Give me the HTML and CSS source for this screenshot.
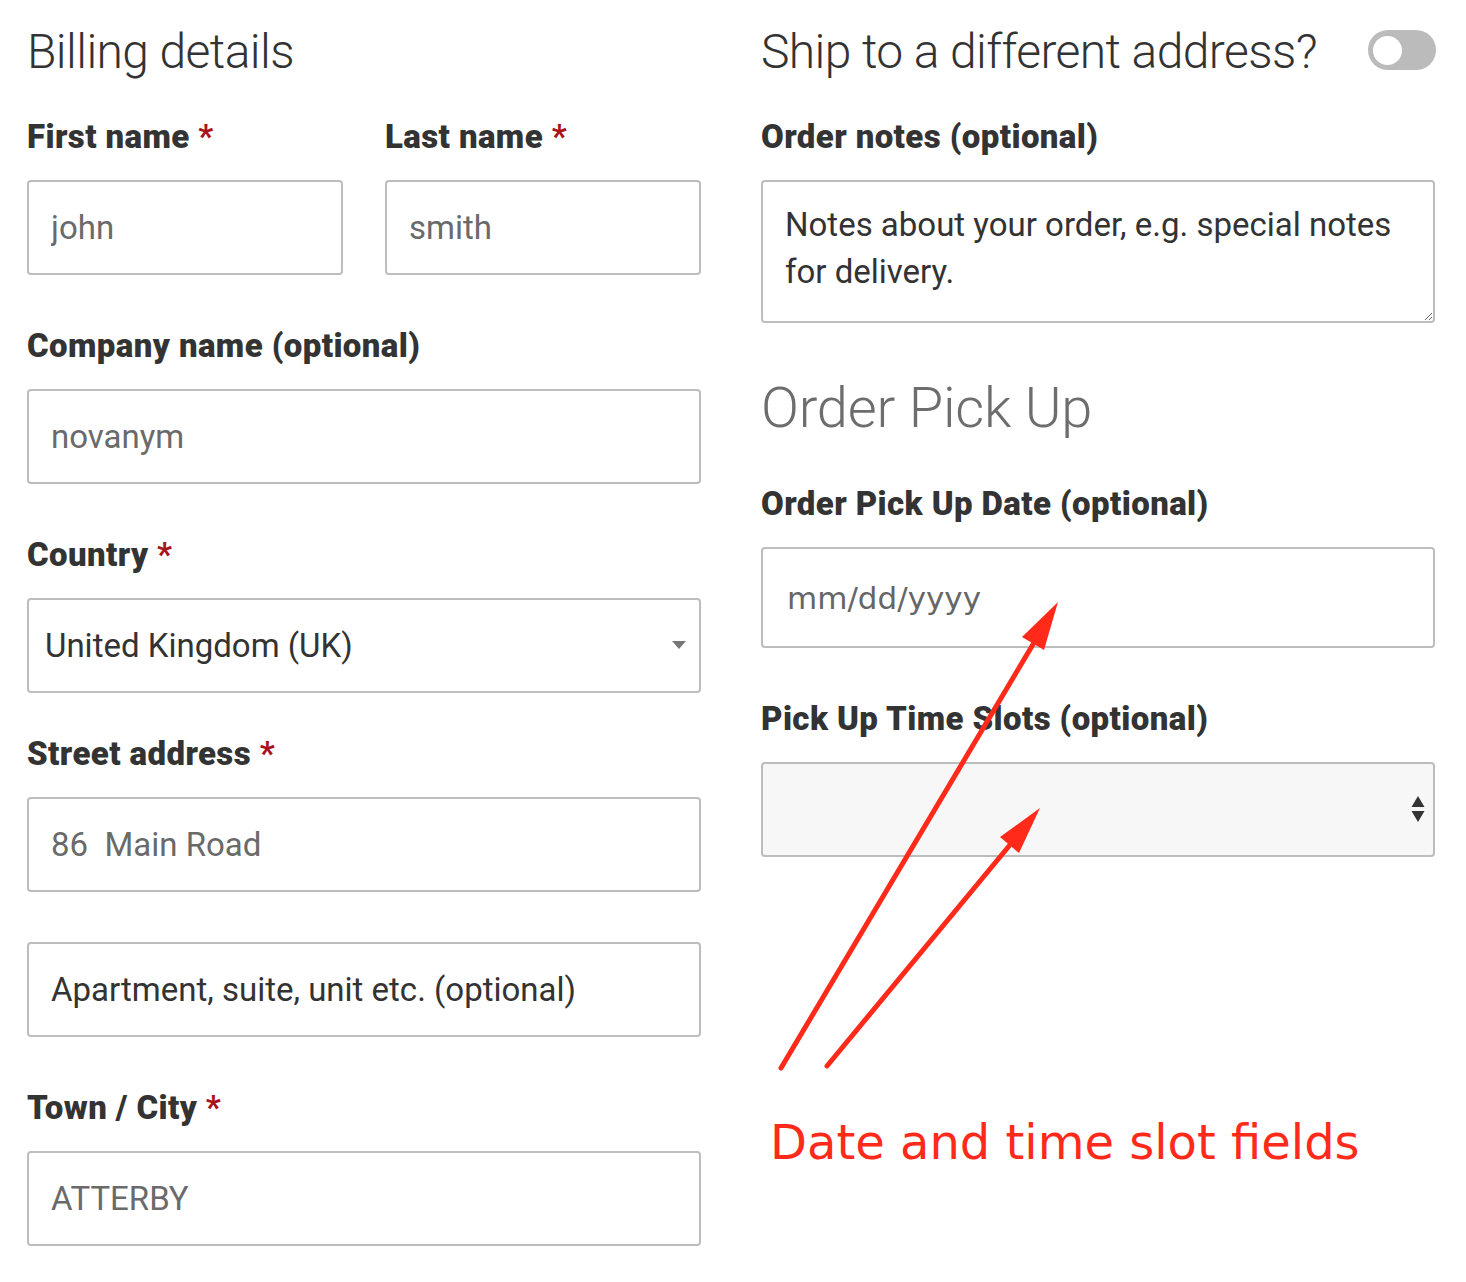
FILE: index.html
```html
<!DOCTYPE html>
<html lang="en">
<head>
<meta charset="utf-8">
<title>Checkout</title>
<link rel="stylesheet" href="styles.css">
</head>
<body>
<div class="page">
  <div class="col">
    <h3 class="heading">Billing details</h3>
    <div class="row">
      <div class="field">
        <label class="label">First name <abbr class="req">*</abbr></label>
        <input class="input" type="text" value="john">
      </div>
      <div class="field">
        <label class="label">Last name <abbr class="req">*</abbr></label>
        <input class="input" type="text" value="smith">
      </div>
    </div>
    <div class="field gap">
      <label class="label">Company name (optional)</label>
      <input class="input" type="text" value="novanym">
    </div>
    <div class="field gap">
      <label class="label">Country <abbr class="req">*</abbr></label>
      <div class="select country">
        <span class="select-text">United Kingdom (UK)</span>
        <svg class="caret" width="16" height="10" viewBox="0 0 16 10"><path d="M1 1h14L8 9z" fill="#777"/></svg>
      </div>
    </div>
    <div class="field gap-sm">
      <label class="label">Street address <abbr class="req">*</abbr></label>
      <input class="input" type="text" value="86  Main Road">
      <input class="input input-dark second" type="text" placeholder="Apartment, suite, unit etc. (optional)">
    </div>
    <div class="field gap">
      <label class="label">Town / City <abbr class="req">*</abbr></label>
      <input class="input" type="text" value="ATTERBY">
    </div>
  </div>

  <div class="col">
    <div class="ship">
      <h3 class="heading">Ship to a different address?</h3>
      <span class="toggle"><span class="knob"></span></span>
    </div>
    <div class="field">
      <label class="label">Order notes (optional)</label>
      <textarea class="textarea" placeholder="Notes about your order, e.g. special notes for delivery."></textarea>
    </div>
    <h3 class="subheading">Order Pick Up</h3>
    <div class="field">
      <label class="label">Order Pick Up Date (optional)</label>
      <input class="input date" type="text" value="mm/dd/yyyy">
    </div>
    <div class="field gap">
      <label class="label">Pick Up Time Slots (optional)</label>
      <div class="select slots">
        <svg class="updown" width="16" height="30" viewBox="0 0 16 30"><path d="M8 2l6.5 11h-13z M1.5 17h13L8 28z" fill="#333"/></svg>
      </div>
    </div>
    <p class="note">Date and time slot fields</p>
  </div>

  <svg class="annot" width="1466" height="1282" viewBox="0 0 1466 1282">
    <g stroke="#ff2a1a" stroke-width="5" stroke-linecap="round" fill="none">
      <line x1="781" y1="1068" x2="1038" y2="636"/>
      <line x1="827" y1="1066" x2="1014" y2="840"/>
    </g>
    <g fill="#ff2a1a">
      <polygon points="1058,602 1044,650 1022,637"/>
      <polygon points="1040,808 1019,853 1000,837"/>
    </g>
  </svg>
</div>
</body>
</html>
```

FILE: styles.css
```css
* { box-sizing: border-box; }

html, body {
  margin: 0;
  padding: 0;
  background: #fff;
}

body {
  font-family: Roboto, "Liberation Sans", sans-serif;
  color: #333;
}

.page {
  position: relative;
  display: grid;
  grid-template-columns: 674px 674px;
  column-gap: 60px;
  padding: 24px 31px 0 27px;
  width: 1466px;
  height: 1282px;
  overflow: hidden;
}

.col {
  display: flex;
  flex-direction: column;
}

.heading {
  margin: 0 0 37px;
  font-weight: 300;
  font-size: 48px;
  line-height: 56px;
  color: #333;
  letter-spacing: -0.6px;
}

.ship {
  display: flex;
  justify-content: space-between;
  align-items: flex-start;
}

.toggle {
  display: flex;
  align-items: center;
  width: 68px;
  height: 40px;
  margin-top: 6px;
  margin-right: -1px;
  padding: 0 5px;
  border-radius: 20px;
  background: #bbb;
}

.knob {
  width: 29px;
  height: 29px;
  border-radius: 50%;
  background: #fff;
}

.row {
  display: grid;
  grid-template-columns: 316px 316px;
  column-gap: 42px;
}

.field {
  display: flex;
  flex-direction: column;
}

.gap { margin-top: 51px; }
.gap-sm { margin-top: 41px; }

.label {
  display: block;
  margin-bottom: 23px;
  font-weight: 900;
  font-size: 33px;
  line-height: 40px;
  letter-spacing: 0.4px;
  color: #333;
}

.req {
  color: #a8141b;
  text-decoration: none;
  font-weight: 700;
}

.input {
  display: block;
  width: 100%;
  height: 95px;
  margin: 0;
  padding: 0 22px;
  border: 2px solid #bdbdbd;
  border-radius: 4px;
  background: #fff;
  font-family: Roboto, "Liberation Sans", sans-serif;
  font-size: 33px;
  letter-spacing: 0;
  color: #6a6a6a;
  outline: none;
}

.input::placeholder { color: #333; opacity: 1; }
.input-dark { color: #333; }
.second { margin-top: 50px; }

.select {
  position: relative;
  display: flex;
  align-items: center;
  height: 95px;
  border: 2px solid #bdbdbd;
  border-radius: 4px;
  background: #fff;
}

.select-text {
  padding-left: 16px;
  font-size: 33px;
  color: #333;
}

.caret {
  position: absolute;
  right: 12px;
  top: 40px;
}

.slots { background: #f7f7f7; }

.updown {
  position: absolute;
  right: 7px;
  top: 30px;
}

.textarea {
  display: block;
  width: 100%;
  height: 143px;
  margin: 0;
  padding: 19px 22px 0;
  border: 2px solid #bdbdbd;
  border-radius: 4px;
  font-family: Roboto, "Liberation Sans", sans-serif;
  font-size: 33px;
  line-height: 47px;
  color: #333;
  outline: none;
}

.textarea::placeholder { color: #333; opacity: 1; }

.subheading {
  margin: 53px 0 44px;
  font-weight: 300;
  font-size: 56px;
  line-height: 64px;
  letter-spacing: -0.2px;
  color: #6d6d6d;
}

.date {
  height: 101px;
  padding-left: 24px;
  font-family: "DejaVu Sans", Verdana, sans-serif;
  font-size: 31px;
  color: #666;
}

.note {
  margin: 257px 0 0 9px;
  font-family: "DejaVu Sans", Verdana, sans-serif;
  font-size: 48px;
  line-height: 56px;
  color: #ff2a1a;
}

.annot {
  position: absolute;
  left: 0;
  top: 0;
  pointer-events: none;
}
```
